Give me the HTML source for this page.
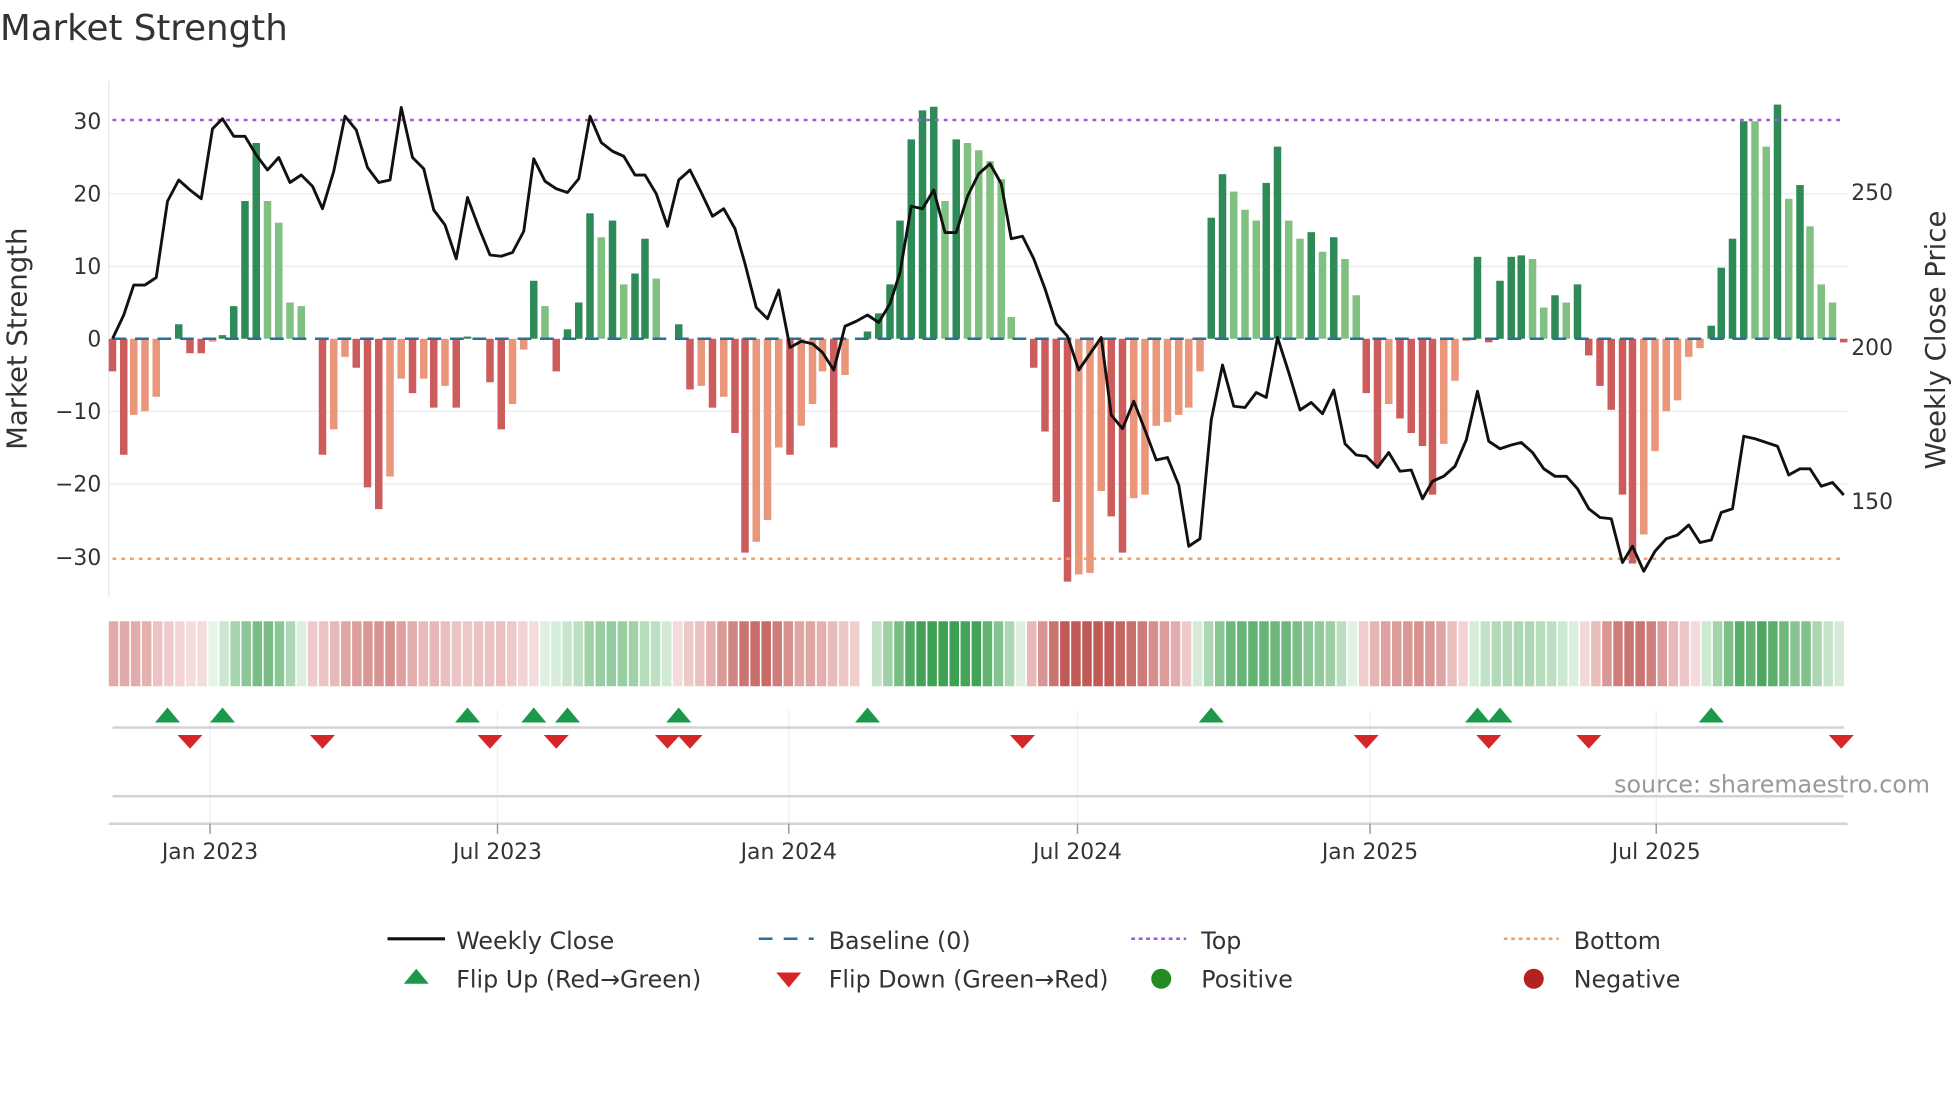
<!DOCTYPE html>
<html><head><meta charset="utf-8">
<style>
html,body{margin:0;padding:0;background:#fff;}
svg{display:block;}
text{font-family:"DejaVu Sans","Liberation Sans",sans-serif;fill:#333;}
</style></head>
<body>
<svg id="s" width="1960" height="1102" viewBox="0 0 1568 881.6" xmlns="http://www.w3.org/2000/svg">
<text x="0" y="32" font-size="28.5">Market Strength</text>
<line x1="87" y1="65" x2="87" y2="478" stroke="#e6e6e6" stroke-width="1"/>
<g stroke="#eef0f3" stroke-width="1.5">
<line x1="87" y1="155" x2="1478" y2="155"/>
<line x1="87" y1="213" x2="1478" y2="213"/>
<line x1="87" y1="329" x2="1478" y2="329"/>
<line x1="87" y1="387" x2="1478" y2="387"/>
</g>
<g font-size="17.5" text-anchor="end">
<text x="81" y="103">30</text>
<text x="81" y="161">20</text>
<text x="81" y="219">10</text>
<text x="81" y="277">0</text>
<text x="81" y="335">−10</text>
<text x="81" y="393">−20</text>
<text x="81" y="452">−30</text>
</g>
<g font-size="17.5">
<text x="1481" y="160">250</text>
<text x="1481" y="284">200</text>
<text x="1481" y="407">150</text>
</g>
<text transform="translate(21,271) rotate(-90)" font-size="22" text-anchor="middle">Market Strength</text>
<text transform="translate(1556,272) rotate(-90)" font-size="22" text-anchor="middle">Weekly Close Price</text>
<g id="bars"></g>
<line x1="90" y1="271" x2="1475" y2="271" stroke="#2a6f97" stroke-width="2" stroke-dasharray="11,7"/>
<line x1="90" y1="96" x2="1476" y2="96" stroke="#9b59d6" stroke-width="2" stroke-dasharray="3,4"/>
<line x1="90" y1="447" x2="1476" y2="447" stroke="#f0a060" stroke-width="2" stroke-dasharray="3,4"/>
<polyline id="price" fill="none" stroke="#111" stroke-width="2.3" stroke-linejoin="round"/>
<g id="heat"></g>
<g stroke="#eef0f3" stroke-width="1">
<line x1="168" y1="568" x2="168" y2="659"/><line x1="398" y1="568" x2="398" y2="659"/>
<line x1="631" y1="568" x2="631" y2="659"/><line x1="862" y1="568" x2="862" y2="659"/>
<line x1="1096" y1="568" x2="1096" y2="659"/><line x1="1325" y1="568" x2="1325" y2="659"/>
</g>
<line x1="90" y1="582" x2="1475" y2="582" stroke="#d0d3d6" stroke-width="2"/>
<line x1="90" y1="637" x2="1475" y2="637" stroke="#d0d3d6" stroke-width="2"/>
<line x1="87" y1="659" x2="1478" y2="659" stroke="#d0d3d6" stroke-width="2"/>
<g stroke="#999" stroke-width="1.2">
<line x1="168" y1="659" x2="168" y2="667"/><line x1="398" y1="659" x2="398" y2="667"/>
<line x1="631" y1="659" x2="631" y2="667"/><line x1="862" y1="659" x2="862" y2="667"/>
<line x1="1096" y1="659" x2="1096" y2="667"/><line x1="1325" y1="659" x2="1325" y2="667"/>
</g>
<g id="tri"></g>
<g font-size="17.5" text-anchor="middle">
<text x="168" y="687">Jan 2023</text><text x="398" y="687">Jul 2023</text>
<text x="631" y="687">Jan 2024</text><text x="862" y="687">Jul 2024</text>
<text x="1096" y="687">Jan 2025</text><text x="1325" y="687">Jul 2025</text>
</g>
<text x="1544" y="634" font-size="19" text-anchor="end" style="fill:#999">source: sharemaestro.com</text>
<g font-size="19">
<line x1="310" y1="751" x2="356" y2="751" stroke="#111" stroke-width="2.5"/>
<text x="365" y="759">Weekly Close</text>
<line x1="607" y1="751" x2="651" y2="751" stroke="#2a6f97" stroke-width="2" stroke-dasharray="11,9"/>
<text x="663" y="759">Baseline (0)</text>
<line x1="905" y1="751" x2="949" y2="751" stroke="#9b59d6" stroke-width="2" stroke-dasharray="3,3"/>
<text x="961" y="759">Top</text>
<line x1="1203" y1="751" x2="1247" y2="751" stroke="#f0a060" stroke-width="2" stroke-dasharray="3,3"/>
<text x="1259" y="759">Bottom</text>
<polygon points="333,775 343,787 323,787" fill="#1a9a48"/>
<text x="365" y="790">Flip Up (Red→Green)</text>
<polygon points="621,778 641,778 631,790" fill="#d62728"/>
<text x="663" y="790">Flip Down (Green→Red)</text>
<circle cx="929" cy="783" r="8" fill="#228b22"/>
<text x="961" y="790">Positive</text>
<circle cx="1227" cy="783" r="8" fill="#b22222"/>
<text x="1259" y="790">Negative</text>
</g>
</svg>
<script>
(function(){
var NS="http://www.w3.org/2000/svg";
function el(t,a,p){var e=document.createElementNS(NS,t);for(var k in a)e.setAttribute(k,a[k]);p.appendChild(e);return e;}
var B=[[90,-4.5,'R'],[99,-16,'R'],[107,-10.5,'r'],[116,-10,'r'],[125,-8,'r'],[143,2,'G'],[152,-2,'R'],[161,-2,'R'],[170,-.4,'r'],[178,.5,'G'],[187,4.5,'G'],[196,19,'G'],[205,27,'G'],[214,19,'g'],[223,16,'g'],[232,5,'g'],[241,4.5,'g'],
[258,-16,'R'],[267,-12.5,'r'],[276,-2.5,'r'],[285,-4,'R'],[294,-20.5,'R'],[303,-23.5,'R'],[312,-19,'r'],[321,-5.5,'r'],[330,-7.5,'R'],[339,-5.5,'r'],[347,-9.5,'R'],[356,-6.5,'r'],[365,-9.5,'R'],[374,.3,'G'],
[392,-6,'R'],[401,-12.5,'R'],[410,-9,'r'],[419,-1.5,'r'],[427,8,'G'],[436,4.5,'g'],[445,-4.5,'R'],[454,1.3,'G'],[463,5,'G'],[472,17.3,'G'],[481,14,'g'],[490,16.3,'G'],[499,7.5,'g'],[508,9,'G'],[516,13.8,'G'],[525,8.3,'g'],[543,2,'G'],
[552,-7,'R'],[561,-6.5,'r'],[570,-9.5,'R'],[579,-8,'r'],[588,-13,'R'],[596,-29.5,'R'],[605,-28,'r'],[614,-25,'r'],[623,-15,'r'],[632,-16,'R'],[641,-12,'r'],[650,-9,'r'],[658,-4.5,'r'],[667,-15,'R'],[676,-5,'r'],
[694,1,'G'],[703,3.5,'G'],[712,7.5,'G'],[720,16.3,'G'],[729,27.5,'G'],[738,31.5,'G'],[747,32,'G'],[756,19,'g'],[765,27.5,'G'],[774,27,'g'],[783,26,'g'],[792,24.5,'g'],[801,22,'g'],[809,3,'g'],
[827,-4,'R'],[836,-12.8,'R'],[845,-22.5,'R'],[854,-33.5,'R'],[863,-32.5,'r'],[872,-32.3,'r'],[881,-21,'r'],[889,-24.5,'R'],[898,-29.5,'R'],[907,-22,'r'],[916,-21.5,'r'],[925,-12,'r'],[934,-11.5,'r'],[943,-10.5,'r'],[951,-9.5,'r'],[960,-4.5,'r'],
[969,16.7,'G'],[978,22.7,'G'],[987,20.3,'g'],[996,17.8,'g'],[1005,16.3,'g'],[1013,21.5,'G'],[1022,26.5,'G'],[1031,16.3,'g'],[1040,13.8,'g'],[1049,14.7,'G'],[1058,12,'g'],[1067,14,'G'],[1076,11,'g'],[1085,6,'g'],
[1093,-7.5,'R'],[1102,-17.5,'R'],[1111,-9,'r'],[1120,-11,'R'],[1129,-13,'R'],[1138,-14.8,'R'],[1146,-21.5,'R'],[1155,-14.5,'r'],[1164,-5.8,'r'],[1173,-.3,'r'],[1182,11.3,'G'],[1191,-.5,'R'],[1200,8,'G'],[1209,11.3,'G'],[1217,11.5,'G'],[1226,11,'g'],[1235,4.3,'g'],[1244,6,'G'],[1253,5,'g'],[1262,7.5,'G'],
[1271,-2.3,'R'],[1280,-6.5,'R'],[1289,-9.8,'R'],[1298,-21.5,'R'],[1306,-31,'R'],[1315,-27,'r'],[1324,-15.5,'r'],[1333,-10,'r'],[1342,-8.5,'r'],[1351,-2.5,'r'],[1360,-1.3,'r'],
[1369,1.8,'G'],[1377,9.8,'G'],[1386,13.8,'G'],[1395,30,'G'],[1404,30,'g'],[1413,26.5,'g'],[1422,32.3,'G'],[1431,19.3,'g'],[1440,21.2,'G'],[1448,15.5,'g'],[1457,7.5,'g'],[1466,5,'g'],[1475,-.5,'R']];
var C={G:'#2e8b57',g:'#80c080',R:'#cd5c5c',r:'#e9967a'};
var bg=document.getElementById('bars'),hg=document.getElementById('heat');
B.forEach(function(b){var y0=271,h=b[1]*5.8;var y=h>0?y0-h:y0;el('rect',{x:b[0]-3,y:y,width:6,height:Math.abs(h),fill:C[b[2]]},bg);});
var vals={};B.forEach(function(b){vals[Math.round((b[0]-90)/8.85)]=b[1];});
var arr=[];for(var i=0;i<=157;i++)arr.push(vals[i]||0);
for(var i=0;i<arr.length;i++){var s=0,n=0;for(var j=i-2;j<=i+2;j++){if(j>=0&&j<arr.length){s+=arr[j];n++;}}var v=s/n;
 var x=87+i*8.85;if(x>1475)break;
 var t=Math.min(1,Math.abs(v)/26);var col;
 if(v>=0){col='rgb('+Math.round(232-(232-62)*t)+','+Math.round(245-(245-160)*t)+','+Math.round(232-(232-82)*t)+')';}
 else{col='rgb('+Math.round(246-(246-192)*t)+','+Math.round(222-(222-90)*t)+','+Math.round(222-(222-86)*t)+')';}
 if(i==68)col='#fff';
 el('rect',{x:x,y:497,width:7.6,height:52,fill:col},hg);}
var P=[[90,271],[99,252],[107,228],[116,228],[125,222],[134,161],[143,144],[152,152],[161,159],[170,103],[178,95],[187,109],[196,109],[205,124],[214,136],[223,126],[232,146],[241,140],[250,149],[258,167],[267,137],[276,93],[285,104],[294,134],[303,146],[312,144],[321,86],[330,126],[339,135],[347,168],[356,180],[365,207],[374,158],[383,182],[392,204],[401,205],[410,202],[419,185],[427,127],[436,145],[445,151],[454,154],[463,143],[472,93],[481,114],[490,121],[499,125],[508,140],[516,140],[525,155],[534,181],[543,144],[552,136],[561,154],[570,173],[579,167],[588,183],[596,211],[605,246],[614,255],[623,232],[632,278],[641,273],[650,275],[658,282],[667,296],[676,261],[685,257],[694,252],[703,258],[712,243],[720,218],[729,165],[738,167],[747,152],[756,186],[765,186],[774,157],[783,139],[792,131],[801,147],[809,191],[818,189],[827,207],[836,231],[845,259],[854,269],[863,296],[872,283],[881,270],[889,332],[898,343],[907,321],[916,344],[925,368],[934,366],[943,388],[951,437],[960,431],[969,336],[978,292],[987,325],[996,326],[1005,314],[1013,318],[1022,270],[1031,298],[1040,328],[1049,322],[1058,331],[1067,312],[1076,355],[1085,364],[1093,365],[1102,374],[1111,362],[1120,377],[1129,376],[1138,399],[1146,385],[1155,381],[1164,373],[1173,352],[1182,313],[1191,353],[1200,359],[1209,356],[1217,354],[1226,362],[1235,375],[1244,381],[1253,381],[1262,391],[1271,407],[1280,414],[1289,415],[1298,450],[1306,437],[1315,457],[1324,441],[1333,431],[1342,428],[1351,420],[1360,434],[1369,432],[1377,410],[1386,407],[1395,349],[1404,351],[1413,354],[1422,357],[1431,380],[1440,375],[1448,375],[1457,389],[1466,386],[1475,396]];
document.getElementById('price').setAttribute('points',P.map(function(p){return p.join(',');}).join(' '));
var tg=document.getElementById('tri');
[134,178,374,427,454,543,694,969,1182,1200,1369].forEach(function(x){el('polygon',{points:(x)+',566 '+(x+10)+',578 '+(x-10)+',578',fill:'#1a9a48'},tg);});
[152,258,392,445,534,552,818,1093,1191,1271,1473].forEach(function(x){el('polygon',{points:(x-10)+',588 '+(x+10)+',588 '+x+',599',fill:'#d62728'},tg);});
})();
</script>
</body></html>
